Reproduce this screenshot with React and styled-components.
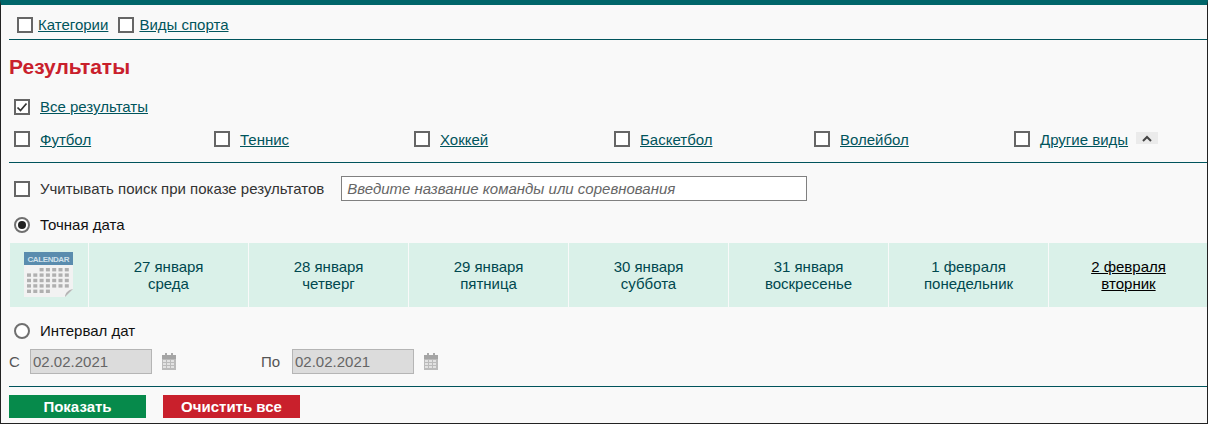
import React from "react";
import styled, { createGlobalStyle } from "styled-components";

const Global = createGlobalStyle`
  html, body { margin: 0; padding: 0; background: #f9f9f9; }
  body { font-family: "Liberation Sans", Arial, sans-serif; font-size: 15px; }
`;
const Frame = styled.div`
  width: 1208px; height: 424px; box-sizing: border-box; overflow: hidden;
  background: #f9f9f9; border-left: 1px solid #222; border-right: 1px solid #222;
  border-bottom: 1px solid #222; border-top: 5px solid #00666a;
`;
const TopBar = styled.div`
  margin-left: 8px; height: 35px; box-sizing: border-box; border-bottom: 1px solid #00545c;
  display: flex; align-items: flex-start; padding: 11px 0 0 8px; gap: 10px;
`;
const Item = styled.label`display: flex; align-items: center; gap: ${p => p.$gap ?? 5}px;`;
const Box = styled.span`
  display: inline-flex; align-items: center; justify-content: center; flex: none;
  width: 16px; height: 16px; box-sizing: border-box; border: 2px solid #666; background: #fff;
`;
const Link = styled.a`color: #00545c; text-decoration: underline; font-size: 15px; line-height: 17px; cursor: pointer;`;
const Title = styled.h1`
  margin: 13px 0 0 8px; font-size: 21px; line-height: 27px; font-weight: bold; color: #c9202c;
`;
const AllRow = styled.div`display: flex; padding: 18px 0 0 13px;`;
const Sports = styled.div`
  display: grid; grid-template-columns: repeat(6, 200px); margin-left: 13px; margin-top: 16px; height: 31px;
`;
const SportItem = styled(Item)`align-items: flex-start;`;
const Caret = styled.span`
  display: inline-flex; align-items: center; justify-content: center;
  width: 22px; height: 12px; background: #ebebeb; margin-left: -2px; position: relative; top: 1px;
`;
const Divider = styled.div`margin-left: 8px; height: 1px; background: #00545c;`;
const SearchRow = styled.div`display: flex; align-items: center; height: 25px; margin-top: 13px; padding-left: 13px;`;
const Plain = styled.span`color: ${p => p.$c || "#333"}; font-size: 15px; line-height: 17px;`;
const SearchInput = styled.input`
  width: 466px; height: 25px; box-sizing: border-box; margin-left: 17px; padding: 0 5px;
  border: 1px solid #808080; background: #fff; font: italic 15px "Liberation Sans", Arial, sans-serif;
  &::placeholder { color: #666; opacity: 1; }
`;
const RadioRow = styled.div`display: flex; padding: ${p => p.$top}px 0 0 13px;`;
const Radio = styled.span`
  display: inline-flex; align-items: center; justify-content: center; flex: none;
  width: 16px; height: 16px; box-sizing: border-box; border-radius: 50%; border: 2px solid #707070; background: #fff;
  &::after { content: ""; display: ${p => p.$on ? "block" : "none"}; width: 8px; height: 8px; border-radius: 50%; background: #222; }
`;
const Strip = styled.div`
  margin: 10px 0 0 9px; height: 64px; display: grid;
  grid-template-columns: 78px repeat(7, 160px); background: #daf1e9;
`;
const IconCell = styled.div`display: flex; align-items: center; justify-content: center; padding: 0 2px 2px 0;`;
const Day = styled.div`
  display: flex; flex-direction: column; align-items: center; justify-content: center;
  border-left: 1px solid #f9f9f9; color: #00484f; font-size: 15px; line-height: 17px;
  ${p => p.$active && "color:#000; text-decoration: underline;"}
`;
const DatesRow = styled.div`display: flex; align-items: center; height: 25px; margin: 10px 0 0 8px;`;
const DateLabel = styled.span`width: ${p => p.$w}px; color: #555; font-size: 15px;`;
const DateInput = styled.input`
  width: 122px; height: 25px; box-sizing: border-box; padding: 0 2px; border: 1px solid #b5b5b5;
  background: #dcdcdc; color: #666; font: 15px "Liberation Sans", Arial, sans-serif;
`;
const PickerGap = styled.span`display: inline-flex; margin: 0 ${p => p.$r}px 0 10px;`;
const ButtonRow = styled.div`display: flex; gap: 17px; margin: 8px 0 0 8px;`;
const Btn = styled.button`
  width: 137px; height: 23px; border: 0; padding: 0; color: #fff; background: ${p => p.$bg};
  font: bold 15px "Liberation Sans", Arial, sans-serif;
`;
const BottomRule = styled(Divider)`margin-top: 12px;`;

const Check = () => (
  <svg width="12" height="12" viewBox="0 0 12 12"><path d="M1.5 6.5 4.5 9.5 10.5 2.5" fill="none" stroke="#333" strokeWidth="1.7" /></svg>
);
const CheckItem = ({ label, on, gap }) => (
  <Item $gap={gap}><Box>{on && <Check />}</Box><Link>{label}</Link></Item>
);
const Mini = () => (
  <svg width="14" height="17" viewBox="0 0 14 17">
    <rect x="3" y="0" width="2" height="3" fill="#aaa" /><rect x="9" y="0" width="2" height="3" fill="#aaa" />
    <rect x="0" y="2" width="14" height="15" fill="#bbb" />
    <rect x="0" y="2" width="14" height="4" fill="#a5a5a5" />
    {[7, 10, 13].map(y => [1, 5, 9].map(x => <rect key={x + "-" + y} x={x} y={y} width="3" height="2" fill="#e2e2e2" />))}
  </svg>
);
const BigCalendar = () => (
  <svg width="49" height="45" viewBox="0 0 49 45">
    <path d="M0 0H49V37L41 45H0Z" fill="#f2f2f2" />
    <rect width="49" height="13" fill="#5a8cae" />
    <text x="24.5" y="9.5" textAnchor="middle" textLength="42" fontFamily="Liberation Sans" fontSize="8" fontWeight="bold" fill="#cfe0ea">CALENDAR</text>
    {[0, 1, 2, 3, 4].map(r => [0, 1, 2, 3, 4, 5, 6].map(c => {
      if ((r === 0 && c < 2) || (r === 4 && c > 3)) return null;
      return <rect key={r + "-" + c} x={3 + c * 6.3} y={16 + r * 5.4} width="4" height="3.4" fill="#b0b0b0" />;
    }))}
    <path d="M49 37 41 45C41 41 44 38 49 37Z" fill="#b5b5b5" />
  </svg>
);

const days = [["27 января", "среда"], ["28 января", "четверг"], ["29 января", "пятница"], ["30 января", "суббота"], ["31 января", "воскресенье"], ["1 февраля", "понедельник"], ["2 февраля", "вторник"]];
const sports = ["Футбол", "Теннис", "Хоккей", "Баскетбол", "Волейбол"];

export default function App() {
  return (
    <Frame>
      <Global />
      <TopBar>
        <CheckItem label="Категории" />
        <CheckItem label="Виды спорта" />
      </TopBar>
      <Title>Результаты</Title>
      <AllRow><CheckItem label="Все результаты" on gap={10} /></AllRow>
      <Sports>
        {sports.map(s => <SportItem key={s} $gap={10}><Box /><Link>{s}</Link></SportItem>)}
        <SportItem $gap={10}>
          <Box /><Link>Другие виды</Link>
          <Caret><svg width="12" height="7" viewBox="0 0 12 7"><path d="M2 6 6 2 10 6" fill="none" stroke="#444" strokeWidth="2" /></svg></Caret>
        </SportItem>
      </Sports>
      <Divider />
      <SearchRow>
        <Item $gap={10}><Box /><Plain>Учитывать поиск при показе результатов</Plain></Item>
        <SearchInput placeholder="Введите название команды или соревнования" />
      </SearchRow>
      <RadioRow $top={15}><Item $gap={10}><Radio $on /><Plain $c="#111">Точная дата</Plain></Item></RadioRow>
      <Strip>
        <IconCell><BigCalendar /></IconCell>
        {days.map((d, i) => <Day key={d[0]} $active={i === 6}><span>{d[0]}</span><span>{d[1]}</span></Day>)}
      </Strip>
      <RadioRow $top={15}><Item $gap={10}><Radio /><Plain $c="#111">Интервал дат</Plain></Item></RadioRow>
      <DatesRow>
        <DateLabel $w={21}>С</DateLabel>
        <DateInput readOnly value="02.02.2021" />
        <PickerGap $r={85}><Mini /></PickerGap>
        <DateLabel $w={31}>По</DateLabel>
        <DateInput readOnly value="02.02.2021" />
        <PickerGap $r={0}><Mini /></PickerGap>
      </DatesRow>
      <BottomRule />
      <ButtonRow>
        <Btn $bg="#068a4b">Показать</Btn>
        <Btn $bg="#c9202c">Очистить все</Btn>
      </ButtonRow>
    </Frame>
  );
}
